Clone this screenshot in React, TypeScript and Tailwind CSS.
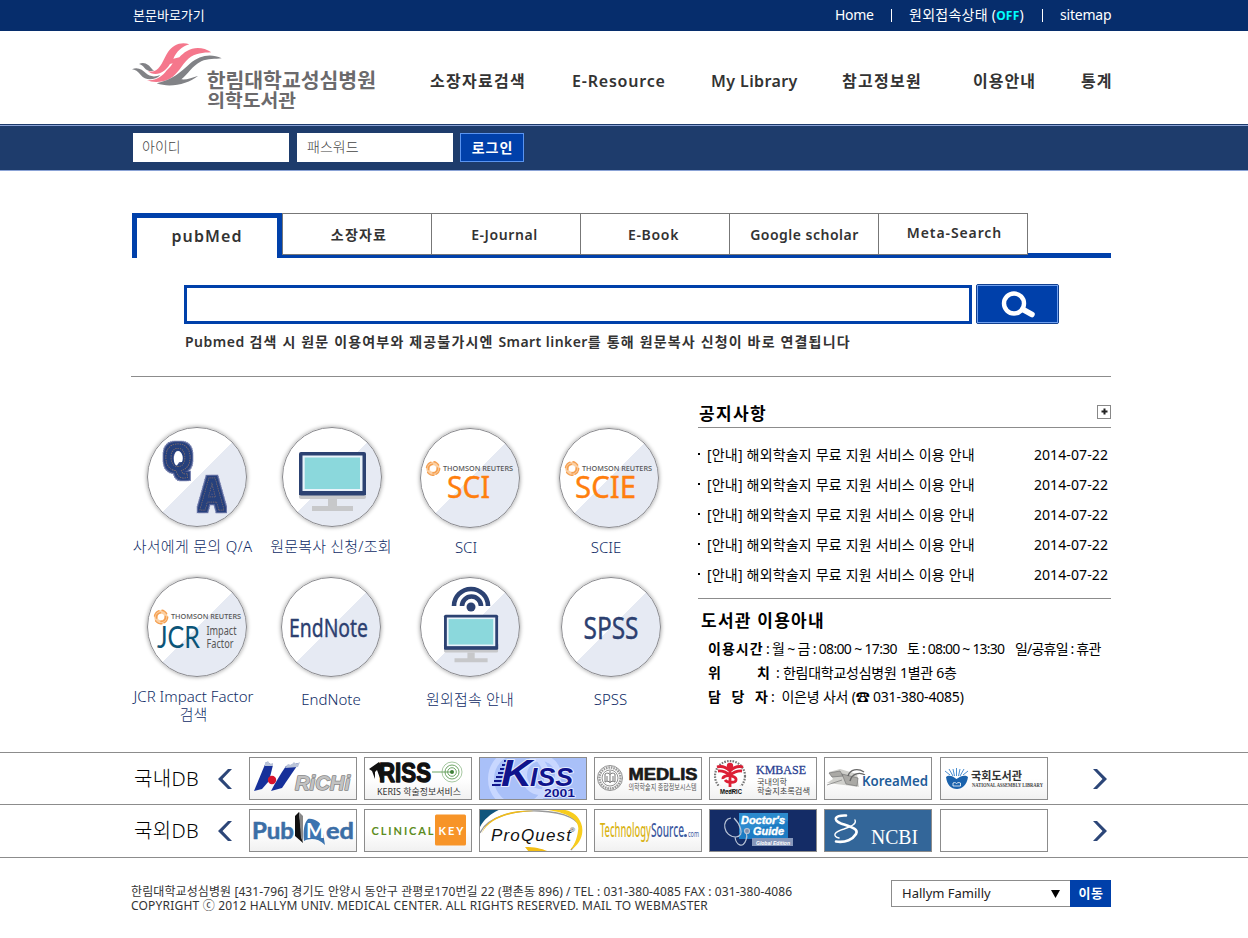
import React from "react";

const KR = "'Noto Sans','Noto Sans CJK KR',sans-serif";

type GlyphProps = {
  x: number;
  y: number;
  w?: number;
  size: number;
  fill?: string;
  weight?: number;
  family?: string;
  italic?: boolean;
  spread?: boolean;
  stroke?: string;
  strokeWidth?: number;
  children: string;
};

/** One run of logo lettering, spread over the width w. */
function Label({ x, y, w, size, fill = "#000", weight = 400, family = KR, italic, spread, stroke, strokeWidth, children }: GlyphProps) {
  return (
    <text
      x={x}
      y={y}
      fontSize={size}
      fill={fill}
      fontWeight={weight}
      fontFamily={family}
      fontStyle={italic ? "italic" : undefined}
      stroke={stroke}
      strokeWidth={strokeWidth}
      strokeLinejoin="round"
      paintOrder="stroke"
      textLength={w}
      lengthAdjust={spread ? "spacing" : "spacingAndGlyphs"}
    >
      {children}
    </text>
  );
}

/* ---------- header ---------- */

function Brand() {
  return (
    <svg className="block h-[72px] w-[250px]" viewBox="30 120 750 216">
      <path fill="#f5778c" d="M208 133C184 125 160 133 144 156C130 178 122 208 101 214C96 216 89 214 84 213C92 222 106 224 119 220C130 216 138 208 147 199C139 216 126 231 106 238C96 241 87 241 80 240C98 249 127 248 149 236C176 221 184 194 205 176C225 159 250 158 274 157C251 141 222 140 201 153C192 158 184 165 178 172L160 176C170 155 184 140 208 133Z" />
      <path fill="#fff" d="M120 222C135 217 150 204 158 190L150 192C142 206 132 217 120 222Z" />
      <path fill="#818286" d="M305 175C272 159 238 167 211 190C186 214 155 241 110 250C151 265 204 252 235 227C218 233 198 240 184 238C204 224 215 198 244 184C263 175 286 178 305 175Z" />
      <path fill="#818286" d="M57 192C74 183 88 196 96 207C99 211 101 211 104 210C95 217 80 212 73 203C68 196 63 194 57 192ZM36 208C52 199 68 209 78 220C88 230 105 232 121 225C105 242 75 242 63 226C54 214 45 209 36 208Z" />
      <Label x={260} y={264} w={508} size={60} weight={700} fill="#6b6a6c">한림대학교성심병원</Label>
      <Label x={262} y={322} w={266} size={54} weight={700} fill="#6b6a6c">의학도서관</Label>
    </svg>
  );
}

function TopBar() {
  return (
    <div className="h-[31px] bg-[#062d6c] pl-[133px] text-sm text-white">
      <div className="flex h-[30px] w-[978px] items-center justify-between">
        <a className="text-[13px]">본문바로가기</a>
        <div className="flex items-center">
          <a className="w-[56px] tracking-[-0.3px]">Home</a>
          <span className="h-[13px] w-px bg-white" />
          <a className="ml-[17px] w-[133px] tracking-[0.25px]">
            원외접속상태 (<b className="text-[12px] font-bold text-[#00ffff]">OFF</b>)
          </a>
          <span className="h-[13px] w-px bg-white" />
          <a className="ml-[17px] w-[51px] tracking-[-0.2px]">sitemap</a>
        </div>
      </div>
    </div>
  );
}

function Header() {
  return (
    <header className="flex h-[93px] pl-[130px]">
      <div className="w-[300px] pt-[9px]">
        <Brand />
      </div>
      <nav className="flex h-[99px] items-center whitespace-nowrap text-base font-semibold text-[#333]">
        <a className="w-[142px] tracking-[1.3px]">소장자료검색</a>
        <a className="w-[139px] tracking-[0.8px]">E-Resource</a>
        <a className="w-[131px] tracking-[0.4px]">My Library</a>
        <a className="w-[131px] tracking-[1.3px]">참고정보원</a>
        <a className="w-[108px] tracking-[1px]">이용안내</a>
        <a className="tracking-[1px]">통계</a>
      </nav>
    </header>
  );
}

function LoginBar() {
  return (
    <div className="h-[47px] border-t border-[#1d3a6a]">
      <div className="flex h-[46px] items-start border-y border-[#8ba3d6] bg-[#1e3c6c] pl-[133px] pt-[7px]">
        <div className="mr-2 h-[29px] w-[156px] bg-white pl-[9px] text-sm font-light leading-[28px] text-[#444]">아이디</div>
        <div className="mr-[7px] h-[29px] w-[156px] bg-white pl-[10px] text-sm font-light leading-[28px] text-[#444]">패스워드</div>
        <button className="h-[29px] w-[64px] border border-[#5a94f0] bg-[#0040aa] pl-px text-center text-sm font-semibold leading-[27px] tracking-[1px] text-white">로그인</button>
      </div>
    </div>
  );
}

/* ---------- search ---------- */

const tabs = [
  { label: "소장자료", cls: "pl-[4px] tracking-[1.2px]" },
  { label: "E-Journal", cls: "pr-[3px] tracking-[0.6px]" },
  { label: "E-Book", cls: "pr-[3px] tracking-[0.7px]" },
  { label: "Google scholar", cls: "pl-px tracking-[0.5px]" },
  { label: "Meta-Search", cls: "pb-[4px] pl-[3px] tracking-[0.9px]" },
];

function Tabs() {
  return (
    <div className="ml-px flex h-[45px] w-[979px] text-sm font-semibold text-[#333]">
      <div className="w-[150px] border-x-[5px] border-t-[5px] border-[#0040aa] pt-[5px] text-center text-base leading-[26px] tracking-[1.1px]">pubMed</div>
      <div className="flex border-b-[3px] border-[#0040aa]">
        {tabs.map((t) => (
          <div key={t.label} className="flex w-[149px] border-y border-r border-[#777] bg-white first:w-[150px] first:border-l">
            <div className={`flex w-full items-center justify-center pt-[2px] ${t.cls}`}>{t.label}</div>
          </div>
        ))}
      </div>
      <div className="flex-1 border-b-[5px] border-[#0040aa]" />
    </div>
  );
}

function SearchBox() {
  return (
    <div className="pl-[53px] pt-[26px]">
      <div className="flex gap-1">
        <div className="mt-px h-[39px] w-[788px] border-[3px] border-[#0040aa]" />
        <button className="h-[40px] w-[83px] rounded-[2px] border border-[#12408f] bg-[#0040aa]">
          <span className="flex h-full w-full items-center justify-center border border-[#6f9fee]">
            <svg className="h-[30px] w-[36px]" viewBox="0 0 36 30" fill="none" stroke="#fff">
              <circle cx="14" cy="14.5" r="10" strokeWidth="4.4" />
              <path d="M23 20.5L32 25.5" strokeWidth="5.5" strokeLinecap="round" />
            </svg>
          </span>
        </button>
      </div>
      <p className="mt-[8px] whitespace-nowrap pl-px text-sm font-semibold leading-5 tracking-[1.17px] text-[#333]">
        <span className="tracking-[0.5px]">Pubmed</span> 검색 시 원문 이용여부와 제공불가시엔 <span className="tracking-[0.45px]">Smart linker</span>를 통해 원문복사 신청이 바로 연결됩니다
      </p>
    </div>
  );
}

/* ---------- round shortcuts ---------- */

function Swirl({ x, y }: { x: number; y: number }) {
  return (
    <g transform={`translate(${x} ${y})`} fill="none" stroke="#f5a052" strokeLinecap="round">
      <circle r="5" stroke="#fbd0a4" strokeWidth="3.6" />
      <path d="M-6.5-1A6.5 6.5 0 0 1-2-6.3M1-6.7A6.6 6.6 0 0 1 6-2.8M6.7 0A6.6 6.6 0 0 1 3 5.8M1 6.7A6.6 6.6 0 0 1-5.4 3.8" strokeWidth="1.4" strokeDasharray="2.4 1" />
      <path d="M-4.5 1A4.5 4.5 0 0 1-.5-4.3M4.5-.5A4.5 4.5 0 0 1 0 4.4" strokeWidth="1.6" />
    </g>
  );
}

function Reuters({ y = 41.5, x = 23 }: { y?: number; x?: number }) {
  return (
    <>
      <Swirl x={x - 10} y={y - 2} />
      <Label x={x} y={y} w={70} size={7.4} weight={500} fill="#555">THOMSON REUTERS</Label>
    </>
  );
}

function Monitor() {
  return (
    <>
      <rect x="17" y="60" width="67" height="11" rx="2" fill="#c7c8ca" />
      <rect x="17" y="24" width="67" height="43.5" rx="2" fill="#2c4272" />
      <path fill="#2c4272" d="M17 60h67v7H17z" />
      <rect x="20.5" y="27.5" width="60" height="35.5" fill="#e9f3fa" />
      <rect x="22.7" y="29.5" width="55.3" height="31.5" fill="#8bd8dc" />
      <path fill="#c7c8ca" d="M46 71h9v7h-9zM30 78h41v5H30z" />
    </>
  );
}

/** Denim patch letters: the filter grows each letter into a two-tone border around its stitching. */
function QaArt() {
  return (
    <>
      <filter id="patch" x="-30%" y="-30%" width="160%" height="160%">
        <feMorphology in="SourceAlpha" operator="dilate" radius="3" result="outer" />
        <feFlood floodColor="#6470a3" />
        <feComposite in2="outer" operator="in" result="rim" />
        <feMorphology in="SourceAlpha" operator="dilate" radius="2" result="inner" />
        <feFlood floodColor="#26407c" />
        <feComposite in2="inner" operator="in" result="body" />
        <feMerge>
          <feMergeNode in="rim" />
          <feMergeNode in="body" />
          <feMergeNode in="SourceGraphic" />
        </feMerge>
      </filter>
      <g fontFamily="'Liberation Sans',sans-serif" fontWeight="700" fill="#26407c" stroke="#8f7964" strokeWidth=".6" strokeDasharray="1.400 1" filter="url(#patch)">
        <text x="17.500" y="42" fontSize="36" textLength="27" lengthAdjust="spacingAndGlyphs">Q</text>
        <text x="52" y="81.500" fontSize="47" textLength="26" lengthAdjust="spacingAndGlyphs">A</text>
      </g>
      <path d="M31 23C26 23 25.500 37 30 37.500L32 34H35C37 30 35 23 31 23Z" fill="#fff" />
    </>
  );
}

type Shortcut = { label: React.ReactNode; cell: string; text: string; art: React.ReactNode };

const row1: Shortcut[] = [
  { label: "사서에게 문의 Q/A", cell: "w-[132px]", text: "-ml-[9px] pt-[10px] tracking-[0.3px]", art: <QaArt /> },
  { label: "원문복사 신청/조회", cell: "w-[138px]", text: "-ml-[2px] pt-[10px] tracking-[0.2px]", art: <Monitor /> },
  {
    label: "SCI",
    cell: "w-[138px] pt-px",
    text: "-ml-[8px] pt-[10px]",
    art: (
      <>
        <Reuters />
        <Label x={27} y={69} w={43} size={30.5} fill="#ff7f0e" stroke="#ff7f0e" strokeWidth={0.4}>SCI</Label>
      </>
    ),
  },
  {
    label: "SCIE",
    cell: "w-[139px] pt-px",
    text: "-ml-[5px] pt-[10px]",
    art: (
      <>
        <Reuters />
        <Label x={16} y={69} w={61} size={30.5} fill="#ff7f0e" stroke="#ff7f0e" strokeWidth={0.4}>SCIE</Label>
      </>
    ),
  },
];

const row2: Shortcut[] = [
  {
    label: (
      <>
        JCR Impact Factor
        <br />
        검색
      </>
    ),
    cell: "w-[132px]",
    text: "-ml-[7px] pt-[10px]",
    art: (
      <>
        <Reuters x={24} y={41} />
        <Label x={10} y={70} w={43} size={31} family="Lato,sans-serif" fill="#0c5578">JCR</Label>
        <Label x={59.5} y={57} w={30} size={12} fill="#555">Impact</Label>
        <Label x={59.5} y={70} w={27} size={12} fill="#555">Factor</Label>
      </>
    ),
  },
  {
    label: "EndNote",
    cell: "w-[136px]",
    text: "pt-[13px]",
    art: <Label x={8} y={59} w={79} size={26} fill="#2c4070" stroke="#2c4070" strokeWidth={0.4}>EndNote</Label>,
  },
  {
    label: "원외접속 안내",
    cell: "w-[142px]",
    text: "pt-[13px] tracking-[0.15px]",
    art: (
      <>
        <g fill="none" stroke="#2c4272" strokeWidth="4.6">
          <path d="M34 28A17 17 0 0 1 68 28M42 28A9.5 9.5 0 0 1 61 28" />
        </g>
        <circle cx="51" cy="29" r="4.5" fill="#2c4272" />
        <g transform="translate(10.3 17.3) scale(.807)">
          <Monitor />
        </g>
      </>
    ),
  },
  {
    label: "SPSS",
    cell: "w-[139px]",
    text: "pt-[13px]",
    art: <Label x={22.5} y={61} w={55} size={30} fill="#2c4070" stroke="#2c4070" strokeWidth={0.4}>SPSS</Label>,
  },
];

function ShortcutRow({ items, cls }: { items: Shortcut[]; cls: string }) {
  return (
    <div className={`flex justify-start ${cls}`}>
      {items.map((s, i) => (
        <div key={i} className={`flex shrink-0 flex-col items-center ${s.cell}`}>
          <div className="size-[100px] rounded-full border-[1.5px] border-[#8a8a8e] bg-[linear-gradient(135deg,#fff_50%,#e6eaf3_50.5%)] shadow-[0_0_4px_rgba(0,0,0,0.4)]">
            <svg className="block size-full" viewBox="1 0 98 98">{s.art}</svg>
          </div>
          <div className={`whitespace-nowrap text-center text-[15px] font-light leading-[18px] text-[#102c66] ${s.text}`}>{s.label}</div>
        </div>
      ))}
    </div>
  );
}

/* ---------- notices ---------- */

function Notices() {
  return (
    <section className="w-[413px]">
      <div className="flex h-[32px] items-center justify-between border-b border-[#8c8c8c]">
        <h2 className="pl-px pt-[3px] text-[17px] font-bold leading-none tracking-[1.4px] text-black">공지사항</h2>
        <span className="flex size-[14px] items-center justify-center border border-[#888]">
          <svg className="size-[7px]" viewBox="0 0 7 7" stroke="#222" strokeWidth="2">
            <path d="M3.5 .5v6M.5 3.5h6" />
          </svg>
        </span>
      </div>
      <ul className="h-[171px] border-b border-[#8c8c8c] pt-[12px] text-sm text-black">
        {[0, 1, 2, 3, 4].map((n) => (
          <li key={n} className="flex h-[30px] items-center pr-[3px]">
            <span className="mb-[3px] mr-[7px] size-[2px] bg-black" />
            <span className="flex-1 tracking-[0.19px]">[안내] 해외학술지 무료 지원 서비스 이용 안내</span>
            <span className="tracking-[0.1px]">2014-07-22</span>
          </li>
        ))}
      </ul>
      <h2 className="mt-[9px] pl-[3px] text-[17px] font-bold leading-[26px] tracking-[1.25px] text-black">도서관 이용아내</h2>
      <div className="mt-[3px] whitespace-pre pl-[10px] text-sm leading-6 text-black">
        <div className="flex">
          <b className="w-[58px] font-bold tracking-[1px]">이용시간</b>
          <span className="flex w-[141px] tracking-[-0.67px]">: 월 ~ 금 : 08:00 ~ 17:30</span>
          <span className="w-[108px] tracking-[-0.8px]">토 : 08:00 ~ 13:30</span>
          <span className="tracking-[-0.8px]">일/공휴일 : 휴관</span>
        </div>
        <div className="flex">
          <b className="flex w-[62px] justify-between font-bold">
            <span>위</span>
            <span>치</span>
          </b>
          <span className="ml-[6px] tracking-[-0.25px]">: 한림대학교성심병원 1별관 6층</span>
        </div>
        <div className="flex">
          <b className="flex w-[60px] justify-between font-bold">
            <span>담</span>
            <span>당</span>
            <span>자</span>
          </b>
          <span className="ml-[3px] tracking-[-0.2px]">:  이은녕 사서 (☎ 031-380-4085)</span>
        </div>
      </div>
    </section>
  );
}

/* ---------- database logos ---------- */

const ARIAL = "'Liberation Sans',sans-serif";
const NARROW = "'Liberation Sans Narrow','Liberation Sans',sans-serif";
const SERIF = "'Liberation Serif',serif";

const domestic = [
  <>
    <path d="M17 5L24 8L20 24L13 32L5 34Z" fill="#16309a" />
    <path d="M37 9L50 6L33 31L22 34C26 26 31 18 37 9Z" fill="#16309a" />
    <path d="M16 6l3-2 2 3 3-1v3l-8 0zM36 11l3-4 3 1 3-3 2 2 4-2-2 5z" fill="#b9c3d8" />
    <circle cx="23" cy="23" r="4.2" fill="#d8142c" />
    <Label x={46} y={33} w={55} size={20} weight={700} italic family={ARIAL} fill="#c2c2c2" stroke="#858585" strokeWidth={1.4}>RiCHi</Label>
  </>,
  <>
    <path d="M5 12L15 5L17 8V24L13 13L11 15V22L8 14Z" fill="#111" />
    <Label x={15} y={25} w={52} size={27} weight={700} family={ARIAL} fill="#111" stroke="#111" strokeWidth={1.4}>RISS</Label>
    <g fill="none" stroke="#5b9a52" strokeWidth=".9">
      <circle cx="88" cy="15" r="10" opacity=".6" />
      <circle cx="88" cy="15" r="7" />
      <circle cx="88" cy="15" r="4.3" />
      <path d="M68 15h20" />
    </g>
    <circle cx="88" cy="15" r="2" fill="#3f7f38" />
    <Label x={13} y={38} w={84} size={9} fill="#333">KERIS 학술정보서비스</Label>
  </>,
  <>
    <path d="M0 0h108v43H0z" fill="#a9c0f8" />
    <g fill="none" stroke="#c8d7ff" strokeWidth="6">
      <circle cx="40" cy="22" r="28" />
      <circle cx="62" cy="18" r="17" />
    </g>
    <path d="M13 28h14M15 24h12M17 20h12M19 16h12M21 12h12M23 8h11M25 4h9" stroke="#10148c" strokeWidth="1.8" />
    <Label x={22} y={28.500} w={31} size={36} weight={700} italic family={ARIAL} fill="#10148c" stroke="#e4ecff" strokeWidth={2}>K</Label>
    <Label x={51} y={28.500} w={43} size={25} weight={700} italic family={ARIAL} fill="#10148c" stroke="#e4ecff" strokeWidth={2}>ISS</Label>
    <Label x={65} y={40} w={31} size={11} weight={700} family={ARIAL} fill="#10148c" stroke="#e4ecff" strokeWidth={1.5}>2001</Label>
  </>,
  <>
    <g fill="none" stroke="#777">
      <circle cx="16" cy="21" r="12.5" strokeWidth=".8" />
      <circle cx="16" cy="21" r="10.5" strokeWidth="2.4" strokeDasharray="1.6 .9" opacity=".75" />
      <circle cx="16" cy="21" r="8" strokeWidth=".8" />
      <path d="M11 17c2-1.500 4-1 5 .5c1-1.500 3-2 5-.5v8c-2-1-4-1-5 .5c-1-1.500-3-1.500-5-.5zM16 14v12M13 19v5M19 19v5" strokeWidth="1" />
    </g>
    <Label x={34.500} y={23} w={69} size={17} weight={700} family={ARIAL} fill="#1a1a1a" stroke="#1a1a1a" strokeWidth={0.7}>MEDLIS</Label>
    <Label x={34.500} y={33} w={68} size={7.5} fill="#555">의학학술지 종합정보시스템</Label>
  </>,
  <>
    <circle cx="21" cy="19" r="15" fill="none" stroke="#777" strokeWidth="2.2" strokeDasharray="1.6 1.2" />
    <path d="M4 33h34v-4H4z" fill="#f8f8f8" />
    <g fill="none" stroke="#dc1f35" strokeWidth="2.800">
      <path d="M21 9v21M8 10c5-1.500 9 0 13 4c4-4 8-5.500 13-4M9 14c5-.5 8 1 12 4c4-3 7-4.500 12-4M14 22c-1-5 14-4 13 1c0 3-9 3-11 0" />
    </g>
    <circle cx="21" cy="9" r="3.200" fill="#dc1f35" />
    <Label x={11} y={37} w={22} size={7} weight={700} family={ARIAL} fill="#111">MedRIC</Label>
    <Label x={47} y={16.500} w={50} size={12.500} family={SERIF} fill="#2a3f92" stroke="#2a3f92" strokeWidth={0.3}>KMBASE</Label>
    <Label x={48} y={27.500} w={30} size={8} fill="#444">국내의학</Label>
    <Label x={48} y={37} w={53} size={8} fill="#444">학술지초록검색</Label>
  </>,
  <>
    <path d="M3 26L9 22L5 15L16 12L33 17L35 30L20 28Z" fill="#cfcfcb" />
    <path d="M5 16L16 14L19 19L8 20ZM18 17L34 21L33 29L22 27ZM3 28L18 23" fill="#aaa9a5" stroke="#777" strokeWidth=".7" />
    <path d="M24 19C26 12 34 11 40 15M26 24C28 16 36 15 41 18" fill="none" stroke="#666" strokeWidth="1.4" />
    <Label x={38} y={29} w={66} size={14} weight={600} fill="#1f5c98" stroke="#fff" strokeWidth={1.5}>KoreaMed</Label>
  </>,
  <>
    <path d="M6 20C9 17 14 20 16.500 22C19 20 25 17 28 20C27 28 22 32 17 32C11 32 7 28 6 20Z" fill="#1a62ac" />
    <path d="M16.500 19V11M13 19L9 12M10 18L5 14M20 19L24 12M23 18L28 14M14.500 19L13 12M18.500 19L20 12" stroke="#4b8fd0" strokeWidth="1" />
    <path d="M13 26c2-1 3 0 3.500.5c.5-.5 2-1.500 4-.5v3h-7.500z" fill="none" stroke="#fff" strokeWidth=".8" />
    <Label x={31} y={22.500} w={51} size={11} weight={600} fill="#333">국회도서관</Label>
    <Label x={32} y={30} w={71} size={5.200} weight={700} family={SERIF} fill="#444">NATIONAL ASSEMBLY LIBRARY</Label>
  </>,
];

const foreign = [
  <>
    <Label x={3} y={30} w={42} size={22} weight={700} family="Lato,sans-serif" fill="#3b6ea6" stroke="#3b6ea6" strokeWidth={0.5}>Pub</Label>
    <path d="M46 7L50 3L53 29L54 34L46 27Z" fill="#111" />
    <path d="M50 3L54 7V33L52 29Z" fill="#888" />
    <path d="M55 32C54 22 55 14 59 10C65 9 71 13 73 18L76 36C69 29 61 29 55 32Z" fill="#3b74b0" />
    <Label x={57} y={29} w={19} size={20} weight={700} family="Lato,sans-serif" fill="#fff">M</Label>
    <Label x={77} y={30} w={28} size={22} weight={700} family="Lato,sans-serif" fill="#3b6ea6" stroke="#3b6ea6" strokeWidth={0.5}>ed</Label>
  </>,
  <>
    <Label x={7.500} y={25.500} w={62} size={11} weight={700} family="Lato,sans-serif" fill="#5c8c22" spread>CLINICAL</Label>
    <rect x="71" y="5.500" width="31" height="31" rx="1.500" fill="#f79428" />
    <Label x={74.500} y={25.500} w={25} size={11} weight={700} family="Lato,sans-serif" fill="#fff" spread>KEY</Label>
  </>,
  <>
    <path d="M0 0h108v43H0z" fill="#fff" />
    <path d="M0 0h22C12 4 4 11 0 20Z" fill="#10557c" />
    <path d="M1 24C8 8 34 1 60 2C86 3 104 11 101 23C99 31 96 37 92 41" fill="none" stroke="#999" strokeWidth="1.300" />
    <path d="M60 0C84 2 102 9 99 22C98 30 95 37 91 41C101 36 106 24 102 14C99 6 92 1 80 0Z" fill="#f8cd1e" />
    <path d="M3 24C10 9 32 3 55 2C30 0 8 9 3 24ZM46 38C56 38 65 40 70 43H50Z" fill="#f2bd16" />
    <Label x={12} y={32} w={80} size={17} italic family={NARROW} fill="#111" spread>ProQuest</Label>
    <Label x={91} y={23} w={5} size={6} family={ARIAL} fill="#111">®</Label>
  </>,
  <>
    <Label x={6} y={27.500} w={51} size={19} weight={500} fill="#d9b416">Technology</Label>
    <Label x={57} y={27.500} w={33} size={19} weight={500} fill="#3c599f">Source</Label>
    <circle cx="91.500" cy="26.500" r="1.500" fill="#3c599f" />
    <Label x={94} y={27.500} w={11} size={8} fill="#3c599f">com</Label>
  </>,
  <>
    <path d="M0 0h108v43H0z" fill="#142c66" />
    <path d="M30 4h49v26H30z" fill="#1d7cc4" />
    <path d="M30 4h49v8L30 24z" fill="#3b97d8" opacity=".5" />
    <g fill="none" stroke="#b9c4d6" strokeWidth="1.200">
      <path d="M22 9C12 10 14 28 27 28C37 27 30 14 25 9M26 28C27 36 34 40 37 31C39 26 37 24 37 22" />
      <circle cx="38" cy="22" r="2.500" fill="#8090ae" />
    </g>
    <Label x={32} y={15} w={44} size={10.500} weight={700} italic family={ARIAL} fill="#fff" stroke="#fff" strokeWidth={0.4}>Doctor's</Label>
    <Label x={44} y={25.500} w={31} size={10.500} weight={700} italic family={ARIAL} fill="#fff" stroke="#fff" strokeWidth={0.4}>Guide</Label>
    <path d="M43 29h41v8H43z" fill="#8798bb" />
    <Label x={47} y={35.500} w={34} size={6} weight={700} italic family={ARIAL} fill="#fff">Global Edition</Label>
  </>,
  <>
    <path d="M0 0h108v43H0z" fill="#336699" />
    <g fill="none" stroke="#fff" strokeLinecap="round">
      <path d="M22 6.500C11 6 8 11 17 14.500C27 18 35 20 32 25C29 30 22 34 12 32.500" strokeWidth="2.600" />
      <path d="M31 11C33 15 26 18 20 20C10 23 8 27 15 29" strokeWidth="1.400" />
    </g>
    <Label x={47} y={34.500} w={47} size={20} family={SERIF} fill="#fff">NCBI</Label>
  </>,
  <path d="M0 0h108v43H0z" fill="#fff" />,
];

function Chevron({ left }: { left?: boolean }) {
  return (
    <svg className="block h-[20px] w-[14px]" viewBox="0 0 14 20" fill="#2c4678">
      <path d={left ? "M10 0H14L4.500 10L14 20H10L0 10Z" : "M4 0H0L9.500 10L0 20H4L14 10Z"} />
    </svg>
  );
}

function DbRow({ title, logos, cls }: { title: string; logos: React.ReactNode[]; cls: string }) {
  return (
    <div className={`flex items-center border-t border-[#8c8c8c] pl-[134px] ${cls}`}>
      <div className="w-[84px] pt-px text-xl font-light tracking-[0.3px] text-black">{title}</div>
      <Chevron left />
      <div className="ml-[17px] flex w-[844px] gap-[7px]">
        {logos.map((art, i) => (
          <div key={i} className="h-[43px] w-[108px] shrink-0 border border-[#8c8c8c] bg-[linear-gradient(#fff_50%,#f1f1f1)] last:ml-px">
            <svg className="block size-full" viewBox="1 1 106 41">{art}</svg>
          </div>
        ))}
      </div>
      <Chevron />
    </div>
  );
}

function Footer() {
  return (
    <footer className="flex h-[80px] border-t border-[#8c8c8c] pl-[131px] pt-[22px]">
      <div className="w-[760px] whitespace-nowrap pt-[5px] text-xs leading-[14px] text-[#333]">
        <p className="tracking-[0.09px]">한림대학교성심병원 [431-796] 경기도 안양시 동안구 관평로170번길 22 (평촌동 896) / TEL : 031-380-4085 FAX : 031-380-4086</p>
        <p className="tracking-[0.2px]">COPYRIGHT ⓒ 2012 HALLYM UNIV. MEDICAL CENTER. ALL RIGHTS RESERVED. MAIL TO WEBMASTER</p>
      </div>
      <div className="flex h-[27px] w-[179px] items-center justify-between border border-r-0 border-[#8c8c8c] pl-[10px] pr-[10px] text-[13px] text-[#222]">
        Hallym Familly
        <svg className="h-[8px] w-[9px]" viewBox="0 0 9 8">
          <path d="M0 0h9L4.500 8z" />
        </svg>
      </div>
      <button className="h-[27px] w-[41px] bg-[#0040aa] pl-px text-[13px] font-semibold tracking-[0.5px] text-white">이동</button>
    </footer>
  );
}

export default function App() {
  return (
    <div className="h-[938px] w-[1248px] overflow-hidden bg-white font-['Noto_Sans','Noto_Sans_CJK_KR',sans-serif]">
      <TopBar />
      <Header />
      <LoginBar />
      <main className="w-[1111px] pl-[131px] pt-[42px]">
        <Tabs />
        <SearchBox />
        <div className="mt-[24px] flex h-[347px] border-t border-[#8c8c8c]">
          <div className="w-[567px] pt-[50px]">
            <ShortcutRow items={row1} cls="h-[150px]" />
            <ShortcutRow items={row2} cls="" />
          </div>
          <div className="pt-[19px]">
            <Notices />
          </div>
        </div>
      </main>
      <div className="pt-[29px]">
        <DbRow title="국내DB" logos={domestic} cls="h-[52px]" />
        <DbRow title="국외DB" logos={foreign} cls="h-[53px] pb-px" />
      </div>
      <Footer />
    </div>
  );
}
